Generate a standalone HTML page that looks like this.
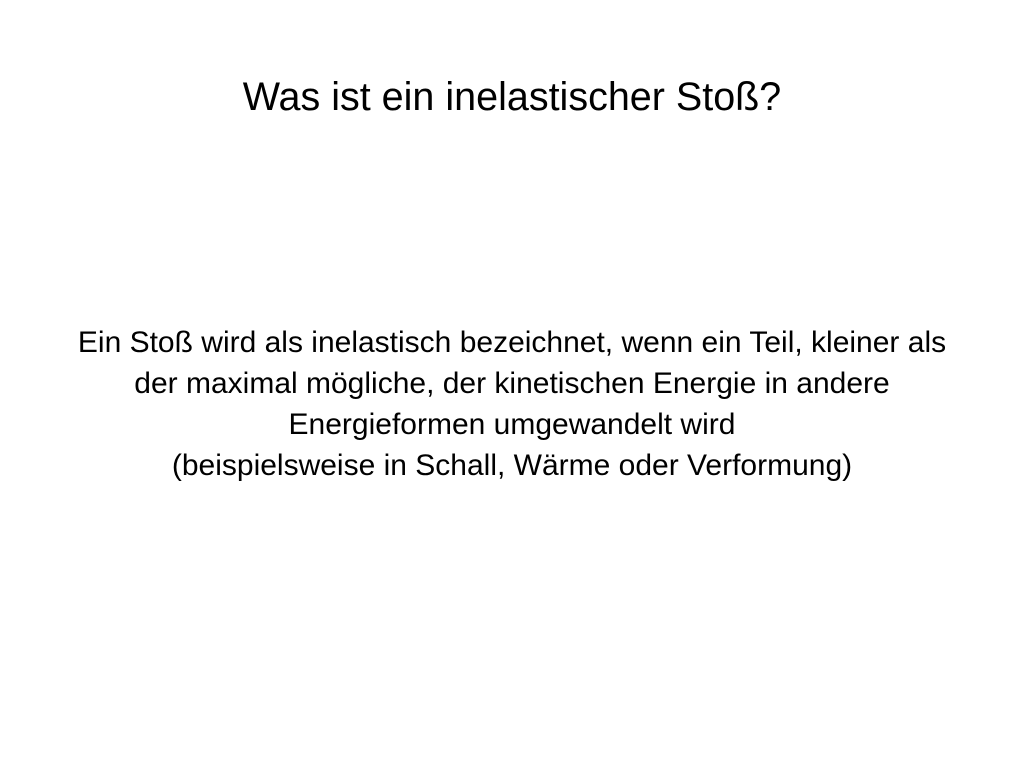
<!DOCTYPE html>
<html><head><meta charset="utf-8"><style>
body{margin:0;width:1024px;height:768px;background:#fff;font-family:"Liberation Sans",sans-serif;color:#000;overflow:hidden}
h1{position:absolute;top:75px;left:0;width:1024px;text-align:center;font-weight:normal;font-size:39.5px;margin:0;line-height:44px}
.b{position:absolute;top:322px;left:0;width:1024px;text-align:center;font-size:30px;line-height:41px}
</style></head><body>
<h1>Was ist ein inelastischer Stoß?</h1>
<div class="b">Ein Stoß wird als inelastisch bezeichnet, wenn ein Teil, kleiner als<br>der maximal mögliche, der kinetischen Energie in andere<br>Energieformen umgewandelt wird<br>(beispielsweise in Schall, Wärme oder Verformung)</div>
</body></html>
